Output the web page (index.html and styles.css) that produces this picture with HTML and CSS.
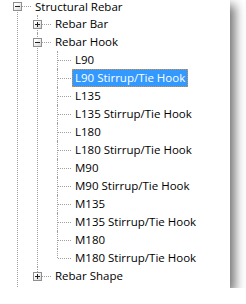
FILE: index.html
```html
<!DOCTYPE html>
<html lang="en">
<head>
    <meta charset="UTF-8">
    <title>Structural Rebar Tree</title>
    <link rel="stylesheet" href="styles.css">
</head>
<body>
    <div class="panel">
        <ul class="tree">
            <li>
                <div class="row top"><span class="toggle minus"></span><span class="label">Structural Rebar</span></div>
                <ul>
                    <li>
                        <div class="row"><span class="toggle plus"></span><span class="label">Rebar Bar</span></div>
                    </li>
                    <li>
                        <div class="row"><span class="toggle minus"></span><span class="label">Rebar Hook</span></div>
                        <ul>
                            <li><div class="row"><span class="label">L90</span></div></li>
                            <li><div class="row"><span class="label selected">L90 Stirrup/Tie Hook</span></div></li>
                            <li><div class="row"><span class="label">L135</span></div></li>
                            <li><div class="row"><span class="label">L135 Stirrup/Tie Hook</span></div></li>
                            <li><div class="row"><span class="label">L180</span></div></li>
                            <li><div class="row"><span class="label">L180 Stirrup/Tie Hook</span></div></li>
                            <li><div class="row"><span class="label">M90</span></div></li>
                            <li><div class="row"><span class="label">M90 Stirrup/Tie Hook</span></div></li>
                            <li><div class="row"><span class="label">M135</span></div></li>
                            <li><div class="row"><span class="label">M135 Stirrup/Tie Hook</span></div></li>
                            <li><div class="row"><span class="label">M180</span></div></li>
                            <li><div class="row"><span class="label">M180 Stirrup/Tie Hook</span></div></li>
                        </ul>
                    </li>
                    <li>
                        <div class="row"><span class="toggle plus"></span><span class="label">Rebar Shape</span></div>
                    </li>
                </ul>
            </li>
        </ul>
    </div>
</body>
</html>
```

FILE: styles.css
```css
body {
    margin: 0;
    background: #fff;
}
.panel {
    width: 230px;
    height: 288px;
    overflow: hidden;
    background: #fff;
    box-shadow: 5px 5px 10px rgba(0, 0, 0, 0.55);
}
.tree, .tree ul {
    list-style: none;
    margin: 0;
    padding: 0;
}
.tree {
    padding-left: 8px;
}
.tree ul {
    padding-left: 20px;
}
.tree li {
    position: relative;
}
/* vertical sibling line */
.tree li::before {
    content: '';
    position: absolute;
    left: 9px;
    top: 0;
    bottom: 0;
    border-left: 1px dotted #a0a0a0;
}
.tree li:last-child::before {
    bottom: auto;
    height: 9px;
}
/* root keeps going to siblings below the view */
.tree > li::before,
.tree > li:last-child::before {
    top: 6px;
    bottom: -20px;
    height: auto;
}
.row {
    position: relative;
    height: 18px;
    padding-left: 24px;
    display: flex;
    align-items: center;
}
/* first row is scrolled partly out of view */
.row.top {
    height: 15px;
    align-items: flex-start;
}
.row.top .label {
    line-height: 13px;
    height: 13px;
}
/* horizontal connector */
.row::after {
    content: '';
    position: absolute;
    left: 10px;
    top: 9px;
    width: 13px;
    border-top: 1px dotted #a0a0a0;
}
.row.top::after {
    top: 6px;
}
.toggle {
    position: absolute;
    left: 5px;
    top: 5px;
    width: 9px;
    height: 9px;
    box-sizing: border-box;
    border: 1px solid #8e8f8f;
    background: linear-gradient(135deg, #ffffff 20%, #d6d6d6);
    z-index: 1;
}
.row.top .toggle {
    top: 2px;
}
.toggle::before {
    content: '';
    position: absolute;
    left: 1px;
    top: 3px;
    width: 5px;
    height: 1px;
    background: #202020;
}
.toggle.plus::after {
    content: '';
    position: absolute;
    left: 3px;
    top: 1px;
    width: 1px;
    height: 5px;
    background: #202020;
}
.label {
    font-family: "Open Sans", sans-serif;
    font-size: 11.5px;
    line-height: 18px;
    height: 18px;
    padding: 0 3px;
    color: #000;
    white-space: nowrap;
    box-sizing: border-box;
}
.label.selected {
    background: #3399ff;
    color: #fff;
    outline: 1px dotted #e0902a;
    outline-offset: -1px;
}
```
